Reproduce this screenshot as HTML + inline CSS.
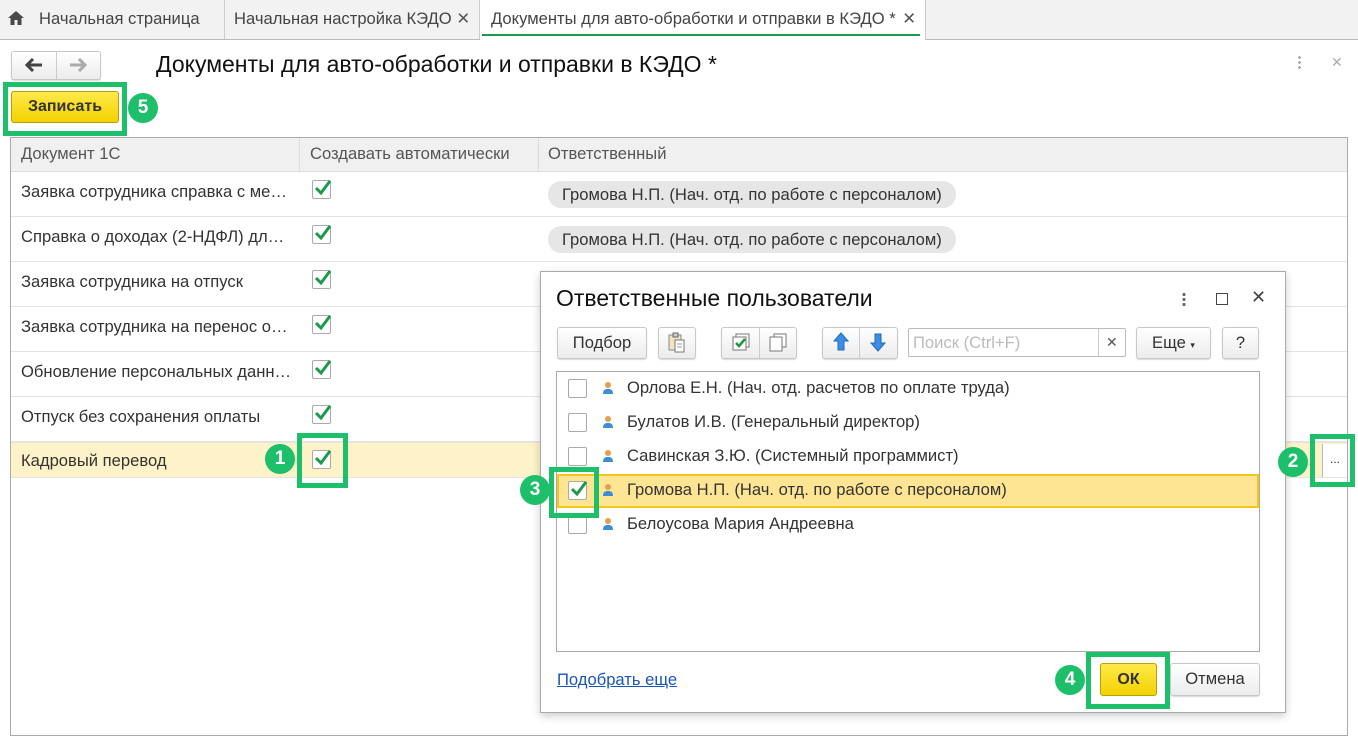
<!DOCTYPE html>
<html><head><meta charset="utf-8"><style>
*{box-sizing:border-box;margin:0;padding:0}
body{width:1358px;height:745px;overflow:hidden;background:#fff;font-family:"Liberation Sans",Arial,sans-serif;font-size:16.6px;color:#333;position:relative}
.a{position:absolute}
.tab{position:absolute;top:0;height:39px;line-height:38px;font-size:16.6px;color:#444;border-right:1px solid #ccc;padding-left:12px;white-space:nowrap}
.cb{position:absolute;width:19px;height:19px;border:1px solid #aaa;border-radius:2px;background:#fff}
.cb svg{position:absolute;left:1px;top:-3px}
.gb{position:absolute;border:5px solid #1dbf6a;z-index:5}
.num{position:absolute;width:30px;height:30px;border-radius:50%;background:#1dbf6a;color:#fff;font-weight:bold;font-size:19px;text-align:center;line-height:30px;z-index:5}
.row{position:absolute;left:11px;width:1336px;height:45px;border-bottom:1px solid #e4e4e4}
.row span{position:absolute;left:10px;top:10px;color:#333;white-space:nowrap}
.pill{position:absolute;left:537px;top:9px;height:27px;line-height:27px;padding:0 14px;background:#e6e6e6;border-radius:13px;color:#333;white-space:nowrap}
.btn{position:absolute;height:32px;border:1px solid #c8c8c8;border-radius:3px;background:linear-gradient(#fff,#ececec);box-shadow:0 1px 1px rgba(0,0,0,.15);text-align:center;line-height:30px;color:#333}
.li{position:absolute;left:1px;width:700px;height:34px}
.li .cb{left:10px;top:7px}
.li .t{position:absolute;left:69px;top:6px;color:#333;white-space:nowrap}
.li .p{position:absolute;left:44px;top:9px}
</style></head><body>
<div class="a" style="left:0;top:0;width:1358px;height:40px;background:#f2f2f2;border-bottom:1px solid #bbb"></div>
<svg class="a" style="left:7px;top:10px" width="18" height="16" viewBox="0 0 18 16"><path d="M9 1L1 8h2.5v7h4v-5h3v5h4V8H17z" fill="#4a4a4a"/></svg>
<div class="tab" style="left:27px;width:198px;padding-left:12px">Начальная страница</div>
<div class="tab" style="left:225px;width:255px;padding-left:9px">Начальная настройка КЭДО <span style="color:#555;margin-left:0">✕</span></div>
<div class="tab" style="left:480px;width:446px;background:#fff;height:40px;border-right:1px solid #ccc;padding-left:11px">Документы для авто-обработки и отправки в КЭДО * <span style="color:#555;margin-left:2px">✕</span></div>
<div class="a" style="left:482px;top:34px;width:438px;height:2px;background:#1a9a4a"></div>
<div class="btn" style="left:11px;top:51px;width:90px;height:29px;padding:0"></div>
<div class="a" style="left:56px;top:52px;width:1px;height:27px;background:#ccc"></div>
<svg class="a" style="left:25px;top:58px" width="18" height="14"><path d="M2 7h15M8 1L2 7l6 6" stroke="#444" stroke-width="3" fill="none"/></svg>
<svg class="a" style="left:69px;top:58px" width="18" height="14"><path d="M1 7h15M10 1l6 6-6 6" stroke="#aaa" stroke-width="3" fill="none"/></svg>
<div class="a" style="left:156px;top:51px;font-size:23px;color:#111;white-space:nowrap">Документы для авто-обработки и отправки в КЭДО *</div>
<div class="a" style="left:1298px;top:55px;width:3px;height:14px;background:radial-gradient(circle,#aaa 1.3px,transparent 1.5px) 0 0/3px 5px"></div>
<div class="a" style="left:1331px;top:54px;color:#aaa;font-size:14px">✕</div>
<div class="a" style="left:11px;top:91px;width:108px;height:32px;border:1px solid #b9a000;border-radius:3px;background:linear-gradient(#ffe94a,#f2d200);text-align:center;line-height:30px;font-weight:bold;color:#333;font-size:16px">Записать</div>
<div class="gb" style="left:3px;top:82px;width:124px;height:54px"></div>
<div class="num" style="left:128px;top:93px">5</div>
<div class="a" style="left:10px;top:137px;width:1338px;height:599px;border:1px solid #aaa"></div>
<div class="a" style="left:11px;top:138px;width:1336px;height:34px;background:#f0f0f0;border-bottom:1px solid #ddd"></div>
<div class="a" style="left:299px;top:138px;width:1px;height:34px;background:#ddd"></div>
<div class="a" style="left:538px;top:138px;width:1px;height:34px;background:#ddd"></div>
<div class="a" style="left:21px;top:144px;color:#555">Документ 1С</div>
<div class="a" style="left:310px;top:144px;color:#555">Создавать автоматически</div>
<div class="a" style="left:548px;top:144px;color:#555">Ответственный</div>

<div class="row" style="top:172px"><span>Заявка сотрудника справка с ме…</span><div class="pill">Громова Н.П. (Нач. отд. по работе с персоналом)</div></div>
<div class="row" style="top:217px"><span>Справка о доходах (2-НДФЛ) дл…</span><div class="pill">Громова Н.П. (Нач. отд. по работе с персоналом)</div></div>
<div class="row" style="top:262px"><span>Заявка сотрудника на отпуск</span></div>
<div class="row" style="top:307px"><span>Заявка сотрудника на перенос о…</span></div>
<div class="row" style="top:352px"><span>Обновление персональных данн…</span></div>
<div class="row" style="top:397px"><span>Отпуск без сохранения оплаты</span></div>
<div class="row" style="top:442px;height:36px;background:#fdf2c8;border-top:1px solid #e4e4e4"><span style="top:8px">Кадровый перевод</span></div>
<div class="a" style="left:1322px;top:444px;width:25px;height:33px;background:#fff;border-left:1px solid #bbb;text-align:center;line-height:30px;font-size:12px">...</div>

<div id="cbs"></div>
<div class="gb" style="left:297px;top:433px;width:51px;height:55px"></div>
<div class="num" style="left:265px;top:444px">1</div>
<div class="gb" style="left:1310px;top:434px;width:45px;height:53px"></div>
<div class="num" style="left:1278px;top:447px">2</div>

<div class="a" style="left:540px;top:271px;width:746px;height:442px;background:#fff;border:1px solid #aaa;box-shadow:0 3px 8px rgba(0,0,0,.2)"></div>
<div class="a" style="left:556px;top:285px;font-size:23px;color:#111;white-space:nowrap">Ответственные пользователи</div>
<div class="a" style="left:1182px;top:292px;width:4px;height:14px;background:radial-gradient(circle,#666 1.5px,transparent 1.7px) 0 0/4px 5px"></div>
<div class="a" style="left:1216px;top:293px;width:12px;height:12px;border:1.5px solid #444"></div>
<div class="a" style="left:1251px;top:287px;font-size:18px;color:#444">✕</div>

<div class="btn" style="left:557px;top:327px;width:90px">Подбор</div>
<div class="btn" style="left:658px;top:327px;width:38px"><svg width="20" height="22" viewBox="0 0 20 22" style="margin-top:4px"><rect x="2" y="3" width="12" height="15" fill="#f3e3c0" stroke="#888"/><rect x="6" y="1" width="5" height="4" fill="#ccc" stroke="#666"/><rect x="8" y="8" width="9" height="12" fill="#fff" stroke="#777"/><path d="M10 12h5M10 15h5" stroke="#999"/></svg></div>
<div class="btn" style="left:721px;top:327px;width:76px"></div>
<div class="a" style="left:759px;top:328px;width:1px;height:30px;background:#ccc"></div>
<svg class="a" style="left:730px;top:333px" width="22" height="20"><rect x="6" y="1" width="13" height="13" fill="#fff" stroke="#777"/><rect x="3" y="4" width="13" height="13" fill="#fff" stroke="#777"/><path d="M6 10l3 3 6-7" stroke="#1a9a3a" stroke-width="2.5" fill="none"/></svg>
<svg class="a" style="left:767px;top:333px" width="22" height="20"><rect x="7" y="1" width="12" height="13" fill="#fff" stroke="#777"/><rect x="3" y="4" width="12" height="14" fill="#fff" stroke="#777"/></svg>
<div class="btn" style="left:822px;top:327px;width:76px"></div>
<div class="a" style="left:859px;top:328px;width:1px;height:30px;background:#ccc"></div>
<svg class="a" style="left:832px;top:332px" width="18" height="20"><path d="M9 1L2 9h4v9h6V9h4z" fill="#3a8ee6" stroke="#2169b8"/></svg>
<svg class="a" style="left:869px;top:332px" width="18" height="20"><path d="M9 19L2 11h4V2h6v9h4z" fill="#3a8ee6" stroke="#2169b8"/></svg>
<div class="a" style="left:908px;top:328px;width:218px;height:29px;border:1px solid #bbb;border-radius:2px"></div>
<div class="a" style="left:913px;top:333px;color:#bbb">Поиск (Ctrl+F)</div>
<div class="a" style="left:1098px;top:329px;width:1px;height:27px;background:#ccc"></div>
<div class="a" style="left:1106px;top:334px;color:#555;font-size:14px">✕</div>
<div class="btn" style="left:1136px;top:327px;width:75px">Еще <span style="font-size:9px">▾</span></div>
<div class="btn" style="left:1222px;top:327px;width:37px">?</div>

<div class="a" style="left:556px;top:371px;width:704px;height:281px;border:1px solid #aaa">
 <div class="li" style="top:0"><div class="cb"></div><svg class="p" width="12" height="14"><circle cx="6" cy="4" r="3" fill="#e0a050"/><path d="M1 13c0-4 2-5 5-5s5 1 5 5z" fill="#3a8ed6"/></svg><div class="t">Орлова Е.Н. (Нач. отд. расчетов по оплате труда)</div></div>
 <div class="li" style="top:34px"><div class="cb"></div><svg class="p" width="12" height="14"><circle cx="6" cy="4" r="3" fill="#e0a050"/><path d="M1 13c0-4 2-5 5-5s5 1 5 5z" fill="#3a8ed6"/></svg><div class="t">Булатов И.В. (Генеральный директор)</div></div>
 <div class="li" style="top:68px"><div class="cb"></div><svg class="p" width="12" height="14"><circle cx="6" cy="4" r="3" fill="#e0a050"/><path d="M1 13c0-4 2-5 5-5s5 1 5 5z" fill="#3a8ed6"/></svg><div class="t">Савинская З.Ю. (Системный программист)</div></div>
 <div class="li" style="top:102px;background:#fde594;border:2px solid #f5c518;width:702px;left:0"><div class="cb" style="left:9px;top:5px"><svg width="18" height="20"><path d="M2 10l5 5 9-12" stroke="#1a9a4a" stroke-width="3" fill="none"/></svg></div><svg class="p" style="left:43px;top:7px" width="12" height="14"><circle cx="6" cy="4" r="3" fill="#e0a050"/><path d="M1 13c0-4 2-5 5-5s5 1 5 5z" fill="#3a8ed6"/></svg><div class="t" style="left:68px;top:4px">Громова Н.П. (Нач. отд. по работе с персоналом)</div></div>
 <div class="li" style="top:136px"><div class="cb"></div><svg class="p" width="12" height="14"><circle cx="6" cy="4" r="3" fill="#e0a050"/><path d="M1 13c0-4 2-5 5-5s5 1 5 5z" fill="#3a8ed6"/></svg><div class="t">Белоусова Мария Андреевна</div></div>
</div>
<div class="gb" style="left:549px;top:467px;width:50px;height:51px"></div>
<div class="num" style="left:520px;top:475px">3</div>

<div class="a" style="left:557px;top:670px;color:#1a55b8;text-decoration:underline">Подобрать еще</div>
<div class="a" style="left:1100px;top:663px;width:57px;height:33px;border:1px solid #b9a000;border-radius:3px;background:linear-gradient(#ffe94a,#f2d200);text-align:center;line-height:31px;font-weight:bold;color:#333;font-size:16px">ОК</div>
<div class="btn" style="left:1170px;top:663px;width:90px;height:33px">Отмена</div>
<div class="gb" style="left:1086px;top:652px;width:84px;height:57px"></div>
<div class="num" style="left:1055px;top:665px">4</div>

<script>
var h='';[180,225,270,315,360,405,450].forEach(function(y){h+='<div class="cb" style="left:312px;top:'+y+'px"><svg width="18" height="20"><path d="M2 10l5 5 9-12" stroke="#1a9a4a" stroke-width="3" fill="none"/></svg></div>'});
document.getElementById('cbs').innerHTML=h;
</script>
</body></html>
